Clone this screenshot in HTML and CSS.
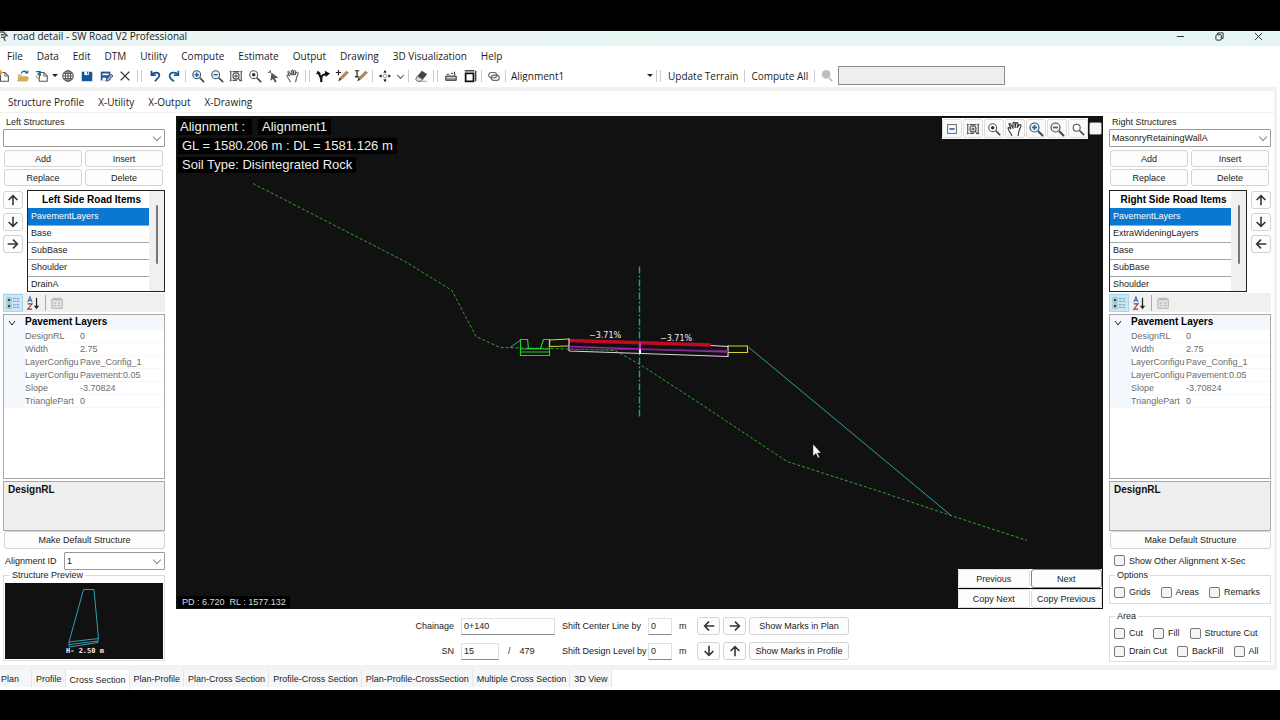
FILE: index.html
```html
<!DOCTYPE html>
<html lang="en">
<head>
<meta charset="utf-8">
<title>road detail - SW Road V2 Professional</title>
<link rel="stylesheet" href="styles.css">
</head>
<body>
<svg class="sprites" aria-hidden="true">
  <symbol id="i-new" viewBox="0 0 16 16"><path d="M4 4h5l4 4v6H4z" fill="#fff" stroke="#555" stroke-width="1.2"/><path d="M9 4v4h4" fill="none" stroke="#555"/><path d="M1 4h6M4 1v6M2 2l4 4M6 2L2 6" stroke="#d9a04c"/></symbol>
  <symbol id="i-open" viewBox="0 0 16 16"><path d="M2 14V6h4l1 2h6v6z" fill="#e2bd80"/><path d="M1 14l3-5h11l-2 5z" fill="#d8a860"/><path d="M6 5c1-3 4-3 6-1" fill="none" stroke="#1d5f9c" stroke-width="1.5"/><path d="M10 5h4V1z" fill="#1d5f9c"/></symbol>
  <symbol id="i-import" viewBox="0 0 16 16"><path d="M5 4h5l4 4v6H5z" fill="#fff" stroke="#555" stroke-width="1.2"/><path d="M10 4v4h4" fill="none" stroke="#555"/><path d="M1 3h5v5M6 3L3 7" fill="none" stroke="#1d6a9c" stroke-width="1.5"/><path d="M1 8l4 4" stroke="#d9a04c" stroke-width="1.5"/></symbol>
  <symbol id="i-globe" viewBox="0 0 16 16"><g fill="none" stroke="#555" stroke-width="1.2"><circle cx="8" cy="8" r="6"/><ellipse cx="8" cy="8" rx="3" ry="6"/><path d="M2 8h12M3 5h10M3 11h10M8 2v12"/></g></symbol>
  <symbol id="i-save" viewBox="0 0 16 16"><path d="M2 3h11l1 1v10H2z" fill="#0f569b"/><path d="M5 3h5v4H5z" fill="#fff"/><path d="M8 3h1v3H8z" fill="#0f569b"/></symbol>
  <symbol id="i-saveas" viewBox="0 0 16 16"><path d="M2 3h11v10H2z" fill="#1a5c96"/><path d="M4 5h7v2H4zM4 10h4v3H4z" fill="#fff"/><path d="M8 14l1-3 5-5 2 2-5 5z" fill="#9ab4c8" stroke="#446"/></symbol>
  <symbol id="i-x" viewBox="0 0 16 16"><path d="M3 3l10 10M13 3L3 13" stroke="#333" stroke-width="1.6"/></symbol>
  <symbol id="i-undo" viewBox="0 0 16 16"><path d="M4 2v5h5" fill="none" stroke="#164f8e" stroke-width="2"/><path d="M4 7c2-4 9-4 9 0 0 3-3 4-5 7" fill="none" stroke="#164f8e" stroke-width="2"/></symbol>
  <symbol id="i-redo" viewBox="0 0 16 16"><path d="M13 2v5H8" fill="none" stroke="#14629a" stroke-width="2"/><path d="M13 7C11 3 3 3 3 8c0 3 2 4 5 6" fill="none" stroke="#14629a" stroke-width="2"/></symbol>
  <symbol id="i-zin" viewBox="0 0 16 16"><circle cx="6.500" cy="6.500" r="4.500" fill="#e6f1fa" stroke="#47505a" stroke-width="1.200"/><path d="M4 6.500h5M6.500 4v5" stroke="#1d67a8" stroke-width="1.600"/><path d="M10 10l5 5" stroke="#444" stroke-width="2"/></symbol>
  <symbol id="i-zout" viewBox="0 0 16 16"><circle cx="6.500" cy="6.500" r="4.500" fill="#e6f1fa" stroke="#47505a" stroke-width="1.200"/><path d="M4 6.500h5" stroke="#1d67a8" stroke-width="1.600"/><path d="M10 10l5 5" stroke="#444" stroke-width="2"/></symbol>
  <symbol id="i-zwin" viewBox="0 0 16 16"><circle cx="6.500" cy="6.500" r="4.500" fill="#fff" stroke="#555" stroke-width="1.200"/><circle cx="6.500" cy="6.500" r="2" fill="#333"/><path d="M10 10l5 5" stroke="#444" stroke-width="2"/></symbol>
  <symbol id="i-mag" viewBox="0 0 16 16"><circle cx="6.500" cy="6.500" r="4" fill="#fff" stroke="#555" stroke-width="1.200"/><path d="M10 10l5 5" stroke="#444" stroke-width="2"/></symbol>
  <symbol id="i-find" viewBox="0 0 16 16"><circle cx="7" cy="6" r="5" fill="#bdbdbd"/><path d="M10 10l4 4" stroke="#bdbdbd" stroke-width="2"/></symbol>
  <symbol id="i-ext" viewBox="0 0 16 16"><g fill="none" stroke="#555" stroke-width="1.300"><circle cx="8" cy="8" r="3.500"/><circle cx="8" cy="8" r="1.200"/><path d="M2 2v12M14 2v12M4 3h8M4 13h5M1 3h2M13 3h2M1 13h2M13 13h2M11 11l2 3"/></g></symbol>
  <symbol id="i-ptr" viewBox="0 0 16 16"><path d="M5 4l8 6-4 .500 2 4-2 1-2-4-3 2z" fill="#555"/><path d="M4 1v3M1 4h3M2 2l2 2" stroke="#666"/></symbol>
  <symbol id="i-hand" viewBox="0 0 16 16"><path d="M5 15C4 12 1 9 1 7c1-1 2 0 3 1L2 3c1-1 2 0 2 1l2 3V2c1-1 2-1 2 0v5l1-5c1-1 2 0 2 1l-1 4 2-3c1-1 2 0 2 1l-2 5-1 5" fill="#fff" stroke="#333" stroke-width="1.100"/></symbol>
  <symbol id="i-road" viewBox="0 0 16 16"><path d="M6 15c1-5-1-6-3-10M6 11c0-4 3-5 6-5" fill="none" stroke="#111" stroke-width="2.400"/><path d="M0 6l2-4 4 3zM10 2l6 3-5 4z" fill="#111"/></symbol>
  <symbol id="i-addpen" viewBox="0 0 16 16"><path d="M1 4h6M4 1v6" stroke="#222" stroke-width="1.400"/><path d="M4 14l1-4 8-8 3 2-8 8z" fill="#b38758"/><path d="M4 14l1-4 2 2z" fill="#333"/></symbol>
  <symbol id="i-epen" viewBox="0 0 16 16"><path d="M1 2h5M3.500 2v7M1 9h5" stroke="#222" stroke-width="1.400"/><path d="M4 14l1-4 8-8 3 2-8 8z" fill="#b38758"/><path d="M4 14l1-4 2 2z" fill="#333"/></symbol>
  <symbol id="i-move" viewBox="0 0 16 16"><circle cx="8" cy="8" r="2" fill="none" stroke="#999"/><path d="M8 3v2M8 11v2M3 8h2M11 8h2" stroke="#555"/><path d="M8 1l2 3H6zM8 15l2-3H6zM1 8l3-2v4zM15 8l-3-2v4z" fill="#222"/></symbol>
  <symbol id="i-erase" viewBox="0 0 16 16"><path d="M9 2l6 4-5 6-6-4z" fill="#454545"/><path d="M4 8l6 4-2 2H4l-2-2z" fill="#ddd" stroke="#555"/><path d="M8 14h7" stroke="#999"/></symbol>
  <symbol id="i-ruler" viewBox="0 0 16 16"><path d="M2 8h12v5H2z" fill="#888" stroke="#333"/><path d="M3 10h10" stroke="#eee"/><path d="M3 6h3M8 5h2M12 3v4" stroke="#444" stroke-width="1.400"/></symbol>
  <symbol id="i-sheet" viewBox="0 0 16 16"><path d="M3 5h9v9H3z" fill="#fff" stroke="#111" stroke-width="2"/><path d="M2 2h11M14.500 2v12" stroke="#444" stroke-width="1.600"/></symbol>
  <symbol id="i-link" viewBox="0 0 16 16"><g fill="none" stroke="#666" stroke-width="1.300"><rect x="2" y="4" width="9" height="6" rx="3"/><rect x="5" y="7" width="9" height="6" rx="3"/></g></symbol>
  <symbol id="i-minus" viewBox="0 0 16 16"><rect x="3" y="3" width="10" height="10" fill="#f7fbff" stroke="#555"/><path d="M5 8h6" stroke="#174a80" stroke-width="1.600"/></symbol>
  <symbol id="i-up" viewBox="0 0 16 16"><path d="M8 14V3M3 8l5-5 5 5" fill="none" stroke="#333" stroke-width="1.800"/></symbol>
  <symbol id="i-down" viewBox="0 0 16 16"><path d="M8 2v11M3 8l5 5 5-5" fill="none" stroke="#333" stroke-width="1.800"/></symbol>
  <symbol id="i-right" viewBox="0 0 16 16"><path d="M2 8h11M8 3l5 5-5 5" fill="none" stroke="#333" stroke-width="1.800"/></symbol>
  <symbol id="i-left" viewBox="0 0 16 16"><path d="M14 8H3M8 3L3 8l5 5" fill="none" stroke="#333" stroke-width="1.800"/></symbol>
  <symbol id="i-cat" viewBox="0 0 16 16"><path d="M1 2h5v5H1zM1 9h5v5H1z" fill="#dff0e4" stroke="#9ab"/><circle cx="3.500" cy="4.500" r="1.500" fill="#154"/><circle cx="3.500" cy="11.500" r="1.500" fill="#154"/><path d="M8 3h3M8 6h3M8 10h3M8 13h3M12 3h3M12 6h3M12 10h3M12 13h3" stroke="#6a94b8"/></symbol>
  <symbol id="i-sort" viewBox="0 0 16 16"><path d="M2 7l2.500-6L7 7M3 5h3" fill="none" stroke="#3468a8" stroke-width="1.200"/><path d="M2 9h5l-5 6h5" fill="none" stroke="#8c3a3a" stroke-width="1.200"/><path d="M12 2v11" stroke="#222" stroke-width="1.400"/><path d="M9 11h6l-3 4z" fill="#222"/></symbol>
  <symbol id="i-page" viewBox="0 0 16 16"><path d="M2 4h12v10H2z" fill="#e4e4e4" stroke="#aaa"/><path d="M3 2h10v3H3z" fill="#bbb"/><path d="M4 8h3M9 8h3M4 11h3M9 11h3" stroke="#aaa"/></symbol>
</svg>

<div class="window">
  <header class="titlebar">
    <svg class="app-icon" viewBox="0 0 10 12"><path d="M0 1h4l3 3-2 3H1M4 7l2 4M7 5h2M1 4h4" fill="none" stroke="#555" stroke-width="1.500"/></svg>
    <span class="title">road detail - SW Road V2 Professional</span>
    <button aria-label="Minimize"><svg viewBox="0 0 10 10"><path d="M1 5h8"/></svg></button>
    <button aria-label="Restore"><svg viewBox="0 0 10 10"><rect x="1" y="3" width="6" height="6" rx="1"/><path d="M3 3V1h6v6H7"/></svg></button>
    <button aria-label="Close"><svg viewBox="0 0 10 10"><path d="M1 1l8 8M9 1L1 9"/></svg></button>
  </header>

  <nav class="menu">
    <button>File</button><button>Data</button><button>Edit</button><button>DTM</button><button>Utility</button><button>Compute</button><button>Estimate</button><button>Output</button><button>Drawing</button><button>3D Visualization</button><button>Help</button>
  </nav>

  <div class="toolbar">
    <button aria-label="New"><svg><use href="#i-new"/></svg></button>
    <button aria-label="Open"><svg><use href="#i-open"/></svg></button>
    <button aria-label="Import"><svg><use href="#i-import"/></svg></button>
    <button class="drop" aria-label="Import options"></button>
    <button aria-label="Map"><svg><use href="#i-globe"/></svg></button>
    <button aria-label="Save"><svg><use href="#i-save"/></svg></button>
    <button aria-label="Save as"><svg><use href="#i-saveas"/></svg></button>
    <button aria-label="Delete"><svg><use href="#i-x"/></svg></button>
    <i class="sep double"></i>
    <button aria-label="Undo"><svg><use href="#i-undo"/></svg></button>
    <button aria-label="Redo"><svg><use href="#i-redo"/></svg></button>
    <i class="sep"></i>
    <button aria-label="Zoom in"><svg><use href="#i-zin"/></svg></button>
    <button aria-label="Zoom out"><svg><use href="#i-zout"/></svg></button>
    <button aria-label="Zoom extents"><svg><use href="#i-ext"/></svg></button>
    <button aria-label="Zoom window"><svg><use href="#i-zwin"/></svg></button>
    <button aria-label="Select"><svg><use href="#i-ptr"/></svg></button>
    <button aria-label="Pan"><svg><use href="#i-hand"/></svg></button>
    <i class="sep double"></i>
    <button aria-label="Road"><svg><use href="#i-road"/></svg></button>
    <button aria-label="Add line"><svg><use href="#i-addpen"/></svg></button>
    <button aria-label="Edit line"><svg><use href="#i-epen"/></svg></button>
    <i class="sep"></i>
    <button aria-label="Move"><svg><use href="#i-move"/></svg></button>
    <button class="chev" aria-label="Move options"></button>
    <i class="sep"></i>
    <button aria-label="Erase"><svg><use href="#i-erase"/></svg></button>
    <i class="sep double"></i>
    <button aria-label="Measure"><svg><use href="#i-ruler"/></svg></button>
    <button aria-label="Sheet"><svg><use href="#i-sheet"/></svg></button>
    <i class="sep"></i>
    <button aria-label="Link"><svg><use href="#i-link"/></svg></button>
    <i class="sep"></i>
    <span class="align-pick"><select aria-label="Alignment"><option>Alignment1</option></select></span>
    <i class="sep double"></i>
    <button class="text">Update Terrain</button>
    <i class="sep"></i>
    <button class="text">Compute All</button>
    <i class="sep"></i>
    <label class="find" for="find"><svg><use href="#i-find"/></svg></label>
    <input id="find" type="text" aria-label="Search">
  </div>

  <div class="page">
    <nav class="submenu"><button>Structure Profile</button><button>X-Utility</button><button>X-Output</button><button>X-Drawing</button></nav>

    <main class="work">
      <aside class="side">
        <label class="caption" for="ls">Left Structures</label>
        <span class="pick"><select id="ls"><option></option></select></span>
        <div class="actions"><button>Add</button><button>Insert</button><button>Replace</button><button>Delete</button></div>
        <div class="items">
          <div class="arrows">
            <button aria-label="Move up"><svg><use href="#i-up"/></svg></button>
            <button aria-label="Move down"><svg><use href="#i-down"/></svg></button>
            <button aria-label="Move right"><svg><use href="#i-right"/></svg></button>
          </div>
          <div class="list">
            <table>
              <thead><tr><th>Left Side Road Items</th></tr></thead>
              <tbody><tr class="on"><td>PavementLayers</td></tr><tr><td>Base</td></tr><tr><td>SubBase</td></tr><tr><td>Shoulder</td></tr><tr><td>DrainA</td></tr></tbody>
            </table>
            <div class="bar"><i></i></div>
          </div>
        </div>
        <div class="ptools">
          <button class="on" aria-label="Categorized"><svg><use href="#i-cat"/></svg></button>
          <button aria-label="Sort"><svg><use href="#i-sort"/></svg></button>
          <i></i>
          <button aria-label="Property pages"><svg><use href="#i-page"/></svg></button>
        </div>
        <div class="props">
          <table>
            <thead><tr><th><svg viewBox="0 0 10 10"><path d="M2 3l3 4 3-4"/></svg></th><th colspan="2">Pavement Layers</th></tr></thead>
            <tbody>
              <tr><td></td><td>DesignRL</td><td>0</td></tr>
              <tr><td></td><td>Width</td><td>2.75</td></tr>
              <tr><td></td><td>LayerConfigu</td><td>Pave_Config_1</td></tr>
              <tr><td></td><td>LayerConfigu</td><td>Pavement:0.05</td></tr>
              <tr><td></td><td>Slope</td><td>-3.70824</td></tr>
              <tr><td></td><td>TrianglePart</td><td>0</td></tr>
            </tbody>
          </table>
        </div>
        <div class="desc">DesignRL</div>
        <button class="wide">Make Default Structure</button>
        <div class="align-row"><label for="aid">Alignment ID</label><span class="pick"><select id="aid"><option>1</option></select></span></div>
        <fieldset class="preview">
          <legend>Structure Preview</legend>
          <svg viewBox="5 583 158 76" preserveAspectRatio="xMidYMid meet">
            <g fill="none" stroke="#2f9fb8"><path d="M83.500 589.500H94L98.500 638.500 69 642z"/><path d="M69 642v5l29-4.500v-4M69 644.500l29-3.500"/></g>
            <text x="66" y="653">H- 2.50 m</text>
          </svg>
        </fieldset>
      </aside>

      <section class="center">
        <div class="canvas">
          <svg class="drawing" viewBox="176 116 927 492">
            <g fill="none">
              <path d="M253 183L325 220 405 261 452 290 476 336 500 347 550 348 615 350 640 364 700 403 787 461 880 491 951 515 1027 540" stroke="#2ea52e" stroke-dasharray="3 2"/>
              <path d="M749 347L951 515M510 347L520 340" stroke="#2aa39a"/>
              <path d="M639.500 266V417" stroke="#0fa39a" stroke-width="1.400" stroke-dasharray="7 2 2 2"/>
              <path d="M520.500 339v16h29v-16h-6l-3 9h-12l-1-9zM520.500 348.500h29M520.500 351.500h29" stroke="#1fd02a" stroke-width="1.200"/>
              <path d="M549.500 339.500L569 338.500M549.500 346L569 345.500M549.500 339.500v6.500M728 345.500h19.500v6.500H728" stroke="#d5d52f" stroke-width="1.200"/>
              <path d="M569 340L711 344.500" stroke="#c00a22" stroke-width="3.500"/>
              <path d="M711 345L728 346M569 350.500L728 356V345M569 338v12.500" stroke="#e6d0e6" stroke-width="1.200"/>
              <path d="M569 346L728 351.500" stroke="#a020b0" stroke-width="1.500"/>
              <path d="M569 348.500L728 350" stroke="#6b2a78"/>
              <path d="M640 342v9" stroke="#d22be0" stroke-width="2"/><path d="M640 349v4" stroke="#fff" stroke-width="2"/>
            </g>
            <g class="grade"><text x="589" y="337">−3.71%</text><text x="660" y="340">−3.71%</text></g>
            <path d="M813 443.500v12l3-2.500 2 4.500 1.500-1-2-4h3.500z" fill="#fff" stroke="#222" stroke-width=".5"/>
          </svg>
          <div class="readout">
            <p><span>Alignment :</span><span>Alignment1</span></p>
            <p><span>GL = 1580.206 m : DL = 1581.126 m</span></p>
            <p><span>Soil Type: Disintegrated Rock</span></p>
          </div>
          <div class="viewtools">
            <div>
              <button aria-label="Collapse"><svg><use href="#i-minus"/></svg></button><button aria-label="Extents"><svg><use href="#i-ext"/></svg></button><button aria-label="Window"><svg><use href="#i-zwin"/></svg></button><button aria-label="Pan view"><svg class="big"><use href="#i-hand"/></svg></button><button aria-label="Zoom in view"><svg class="big"><use href="#i-zin"/></svg></button><button aria-label="Zoom out view"><svg class="big"><use href="#i-zout"/></svg></button><button aria-label="Magnify"><svg><use href="#i-mag"/></svg></button>
            </div>
            <input type="checkbox" aria-label="Lock view">
          </div>
          <div class="coords">PD : 6.720&nbsp; RL : 1577.132</div>
          <div class="steps"><button>Previous</button><button class="focus">Next</button><button>Copy Next</button><button>Copy Previous</button></div>
        </div>
        <div class="station">
          <label class="r" for="ch">Chainage</label><input id="ch" value="0+140">
          <label for="cl">Shift Center Line by</label><input id="cl" value="0"><span>m</span>
          <div class="shift"><button aria-label="Shift left"><svg><use href="#i-left"/></svg></button><button aria-label="Shift right"><svg><use href="#i-right"/></svg></button><button class="mark">Show Marks in Plan</button></div>
          <label class="r" for="sn">SN</label><div class="sn"><input id="sn" value="15"><span>/</span><span>479</span></div>
          <label for="dl">Shift Design Level by</label><input id="dl" value="0"><span>m</span>
          <div class="shift"><button aria-label="Shift down"><svg><use href="#i-down"/></svg></button><button aria-label="Shift up"><svg><use href="#i-up"/></svg></button><button class="mark">Show Marks in Profile</button></div>
        </div>
      </section>

      <aside class="side">
        <label class="caption" for="rs">Right Structures</label>
        <span class="pick"><select id="rs"><option>MasonryRetainingWallA</option></select></span>
        <div class="actions"><button>Add</button><button>Insert</button><button>Replace</button><button>Delete</button></div>
        <div class="items">
          <div class="list">
            <table>
              <thead><tr><th>Right Side Road Items</th></tr></thead>
              <tbody><tr class="on"><td>PavementLayers</td></tr><tr><td>ExtraWideningLayers</td></tr><tr><td>Base</td></tr><tr><td>SubBase</td></tr><tr><td>Shoulder</td></tr></tbody>
            </table>
            <div class="bar"><i></i></div>
          </div>
          <div class="arrows">
            <button aria-label="Move up"><svg><use href="#i-up"/></svg></button>
            <button aria-label="Move down"><svg><use href="#i-down"/></svg></button>
            <button aria-label="Move left"><svg><use href="#i-left"/></svg></button>
          </div>
        </div>
        <div class="ptools">
          <button class="on" aria-label="Categorized"><svg><use href="#i-cat"/></svg></button>
          <button aria-label="Sort"><svg><use href="#i-sort"/></svg></button>
          <i></i>
          <button aria-label="Property pages"><svg><use href="#i-page"/></svg></button>
        </div>
        <div class="props">
          <table>
            <thead><tr><th><svg viewBox="0 0 10 10"><path d="M2 3l3 4 3-4"/></svg></th><th colspan="2">Pavement Layers</th></tr></thead>
            <tbody>
              <tr><td></td><td>DesignRL</td><td>0</td></tr>
              <tr><td></td><td>Width</td><td>2.75</td></tr>
              <tr><td></td><td>LayerConfigu</td><td>Pave_Config_1</td></tr>
              <tr><td></td><td>LayerConfigu</td><td>Pavement:0.05</td></tr>
              <tr><td></td><td>Slope</td><td>-3.70824</td></tr>
              <tr><td></td><td>TrianglePart</td><td>0</td></tr>
            </tbody>
          </table>
        </div>
        <div class="desc">DesignRL</div>
        <button class="wide">Make Default Structure</button>
        <label class="check other"><input type="checkbox">Show Other Alignment X-Sec</label>
        <fieldset class="options">
          <legend>Options</legend>
          <div class="checks"><label class="check"><input type="checkbox">Grids</label><label class="check"><input type="checkbox">Areas</label><label class="check"><input type="checkbox">Remarks</label></div>
        </fieldset>
        <fieldset class="area">
          <legend>Area</legend>
          <div class="checks"><label class="check"><input type="checkbox">Cut</label><label class="check"><input type="checkbox">Fill</label><label class="check"><input type="checkbox">Structure Cut</label></div>
          <div class="checks"><label class="check"><input type="checkbox">Drain Cut</label><label class="check"><input type="checkbox">BackFill</label><label class="check"><input type="checkbox">All</label></div>
        </fieldset>
      </aside>
    </main>
  </div>

  <nav class="tabs"><button>Plan</button><button>Profile</button><button class="on">Cross Section</button><button>Plan-Profile</button><button>Plan-Cross Section</button><button>Profile-Cross Section</button><button>Plan-Profile-CrossSection</button><button>Multiple Cross Section</button><button>3D View</button></nav>
</div>
</body>
</html>
```
FILE: styles.css
```css
* { box-sizing: border-box; }
body {
  margin: 0;
  min-height: 100vh;
  padding: 31px 0;
  display: flex;
  background: #000;
  color: #1c1c1c;
  font: 9px/12px "Liberation Sans", Arial, sans-serif;
  overflow: hidden;
}
button, input, select { font: inherit; color: inherit; margin: 0; }
button { padding: 0; border: 0; background: none; white-space: nowrap; }
fieldset { margin: 0; min-width: 0; }
.sprites { position: absolute; width: 0; height: 0; }

.window { flex: 1; min-width: 0; display: flex; flex-direction: column; background: #fff; }

.titlebar {
  height: 15px;
  display: flex;
  align-items: center;
  padding: 0 2px 5px 0;
  background: linear-gradient(90deg, #eaf4f3, #e4f6f4);
  font-family: "Open Sans", "Noto Sans", sans-serif;
  font-size: 10px;
}
.titlebar .app-icon { width: 9px; height: 11px; margin-right: 4px; }
.titlebar .title { flex: 1; }
.titlebar button { width: 39px; height: 11px; display: flex; justify-content: center; align-items: center; }
.titlebar button svg { width: 9px; height: 9px; fill: none; stroke: #222; }

.menu, .submenu, .toolbar { display: flex; align-items: center; font-family: "Open Sans", "Noto Sans", sans-serif; font-size: 10px; }
.menu { height: 19px; padding-left: 7px; gap: 14px; }

.toolbar { height: 22px; padding-bottom: 1px; overflow: hidden; }
.toolbar button { flex: none; width: 19px; height: 18px; display: flex; align-items: center; justify-content: center; }
.toolbar button:first-child { margin-left: -6px; }
.toolbar svg { width: 14px; height: 14px; }
.toolbar .drop { width: 7px; }
.drop::after, .align-pick::after { content: ""; border: 3px solid transparent; border-top-color: #222; border-bottom: 0; }
.toolbar .chev { width: 12px; }
.chev::after { content: ""; width: 4px; height: 4px; border: solid #555; border-width: 0 1px 1px 0; transform: rotate(45deg); }
.sep { flex: none; width: 1px; height: 12px; margin: 0 2px; background: #ccc; }
.sep.double { width: 5px; margin: 0 3px; background: none; border: solid #ccc; border-width: 0 1px; }
.align-pick { width: 145px; display: flex; align-items: center; }
.align-pick select { flex: 1; appearance: none; border: 0; background: none; padding: 0 3px; }
.toolbar .text { width: auto; padding: 0 4px; }
.find { display: flex; padding: 0 4px 0 3px; }
.toolbar input { width: 167px; height: 19px; border: 1px solid #8c8c8c; background: #eee; }

.page {
  flex: 1;
  display: flex;
  flex-direction: column;
  border: solid #f2f2f2;
  border-width: 4px 3px 5px 0;
  margin-right: 3px;
}
.submenu { height: 22px; padding-left: 8px; gap: 14px; border-bottom: 1px solid #f0f0f0; }

.work {
  flex: 1;
  display: grid;
  grid-template-columns: 162px minmax(0, 1fr) 162px;
  padding: 3px 3px 3px 3px;
}
.side { display: flex; flex-direction: column; }
.caption { height: 13px; padding-left: 3px; }
.pick { display: flex; position: relative; }
.pick select { flex: 1; min-width: 0; height: 18px; appearance: none; border: 1px solid #9a9a9a; border-radius: 1px; background: #fff; padding: 0 2px; }
.pick::after {
  content: "";
  position: absolute;
  right: 5px;
  top: 5px;
  width: 5px;
  height: 5px;
  border: solid #888;
  border-width: 0 1px 1px 0;
  transform: rotate(45deg);
  pointer-events: none;
}

.actions { display: grid; grid-template-columns: 1fr 1fr; gap: 2px 3px; padding: 3px 2px 4px 1px; }
.actions button, .wide, .arrows button, .shift button, .steps button {
  border: 1px solid #d4d4d4;
  border-radius: 3px;
  background: #fdfdfd;
}
.actions button { height: 17px; }

.items { display: flex; gap: 4px; }
.arrows { flex: none; width: 20px; display: flex; flex-direction: column; gap: 4px; padding-top: 1px; }
.arrows button { height: 18px; display: flex; align-items: center; justify-content: center; }
.arrows svg, .shift svg { width: 14px; height: 14px; }
.list { flex: 1; height: 102px; display: flex; border: 1px solid #222; overflow: hidden; }
.list table { flex: 1; border-collapse: collapse; }
.list th { height: 17px; padding: 0 0 0 6px; font-size: 10px; white-space: nowrap; color: #000; }
.list td { height: 17px; padding: 0 3px 1px; border-bottom: 1px solid #a8a8a8; }
.list .on td { background: #0a78d0; color: #fff; }
.bar { width: 15px; padding: 14px 6px 0 7px; background: #f0f0f0; }
.bar i { display: block; height: 59px; background: #777; border-radius: 1px; }

.ptools { height: 19px; margin: 1px 0 2px; display: flex; align-items: center; background: #f0f0f0; }
.ptools button { width: 20px; height: 18px; display: flex; align-items: center; justify-content: center; }
.ptools .on { background: #cbe6f7; border: 1px solid #a8d4f0; }
.ptools svg { width: 14px; height: 14px; }
.ptools i { width: 1px; height: 16px; margin: 0 1px 0 2px; background: #aaa; }

.props { height: 165px; border: 1px solid #a8a8a8; }
.props table { width: 100%; border-collapse: collapse; }
.props tr { display: grid; grid-template-columns: 21px 55px minmax(0, 1fr); }
.props thead tr { grid-template-columns: 21px minmax(0, 1fr); }
.props th { height: 15px; padding: 1px 0 0; text-align: left; background: #f4f7fb; color: #000; white-space: nowrap; }
.props th:first-child { display: flex; align-items: center; }
.props th svg { width: 10px; height: 10px; margin-left: 3px; fill: none; stroke: #222; }
.props td { height: 13px; padding: 0; color: #6d6d6d; overflow: hidden; white-space: nowrap; border-bottom: 1px solid #f5f7fa; }
.props td:first-child { background: #f4f7fb; }
.props th:last-child, .desc { font-size: 10px; font-weight: bold; }

.desc { height: 50px; margin-top: 2px; padding: 2px 4px; background: #eee; border: 1px solid #a8a8a8; color: #111; }
.wide { height: 18px; margin: 0 0 3px 1px; }
.align-row { display: flex; align-items: center; height: 18px; padding-left: 2px; }
.align-row label { width: 59px; }
.align-row .pick { flex: 1; }

fieldset { border: 1px solid #dcdcdc; padding: 0; }
legend { padding: 0 2px; margin-left: 5px; line-height: 10px; }
.preview { padding: 3px 1px 1px; }
.preview svg { display: block; width: 100%; height: 76px; background: #111; }
.preview text { font: bold 7px "DejaVu Sans Mono", monospace; fill: #eee; }

.check { display: flex; align-items: center; gap: 4px; white-space: nowrap; }
input[type="checkbox"] { appearance: none; flex: none; width: 11px; height: 11px; border: 1px solid #777; border-radius: 2px; background: #f5f5f5; }
.other { height: 17px; margin-bottom: 1px; padding-left: 5px; }
.options { height: 34px; }
.area { height: 51px; margin-top: 7px; }
.checks { display: flex; gap: 10px; padding: 6px 0 0 4px; }

.center { display: flex; flex-direction: column; min-width: 0; padding: 0 6px 0 11px; }
.canvas { position: relative; flex: 1; display: flex; min-height: 480px; background: #111; }
.drawing { position: absolute; width: 100%; height: 100%; }
.grade { font: 8px "DejaVu Sans", sans-serif; fill: #eee; }
.readout { position: absolute; left: 2px; top: 3px; color: #eee; font-size: 13px; line-height: 16px; }
.readout p { margin: 0 0 3px; display: flex; gap: 6px; }
.readout span { background: #000; padding: 0 4px; }
.readout p:first-child span { padding: 0 7px 0 2px; }
.readout p:first-child span + span { padding: 0 4px; }
.viewtools { position: absolute; right: 1px; top: 2px; display: flex; align-items: center; gap: 1px; }
.viewtools div { display: flex; gap: 1px; padding: 1px 0; background: #fff; }
.viewtools button { width: 20px; height: 19px; display: flex; align-items: center; justify-content: center; border: 1px solid #ddd; border-radius: 2px; background: #fafafa; }
.viewtools svg { width: 14px; height: 14px; }
.viewtools .big { width: 16px; height: 16px; }
.viewtools input[type="checkbox"] { width: 13px; height: 13px; }
.coords { position: absolute; left: 2px; bottom: 1px; padding: 0 4px; background: #000; color: #ddd; }
.steps {
  position: absolute;
  right: 1px;
  bottom: 1px;
  width: 144px;
  display: grid;
  grid-template-columns: 1fr 1fr;
  gap: 1px;
  background: linear-gradient(#fff 19px, #000 19px, #000 20px, #fff 20px);
}
.steps button { height: 19px; border-color: #ddd; }
.steps .focus { border-color: #3d9bd8; }

.station {
  display: grid;
  grid-template-columns: 43px 94px 79px 24px 8px 155px;
  justify-content: center;
  align-content: start;
  align-items: center;
  gap: 7px;
  padding: 8px 19px 0 0;
  height: 53px;
  white-space: nowrap;
}
.station .r { text-align: right; }
.station input { width: 100%; min-width: 0; height: 17px; padding: 0 2px; border: 1px solid #e0e0e0; border-bottom-color: #888; background: #fff; }
.station .sn input { width: 38px; }
.sn { display: flex; align-items: center; gap: 9px; }
.shift { display: flex; gap: 3px; padding-left: 3px; }
.shift button { width: 23px; height: 18px; display: flex; align-items: center; justify-content: center; }
.shift .mark { flex: 1; }

.tabs { height: 20px; display: flex; align-items: flex-start; }
.tabs button { height: 17px; padding: 0 3px 0 4px; background: #f5f6f7; border-right: 1px solid #e6e6e6; }
.tabs button:first-child { padding: 0 12px 0 1px; }
.tabs .on { height: 20px; background: #fff; }
```
